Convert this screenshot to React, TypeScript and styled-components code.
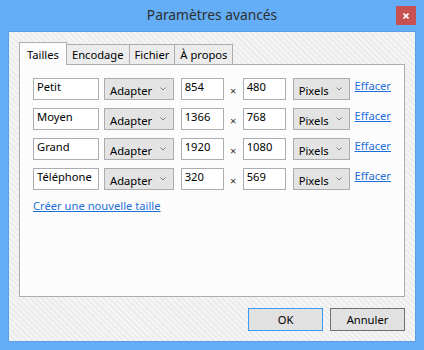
import React from "react";
import styled, { createGlobalStyle } from "styled-components";

const FONT = `"Noto Sans", "Segoe UI", "Liberation Sans", Arial, sans-serif`;
const FS = "11.2px";

const Global = createGlobalStyle`
  html, body { margin: 0; padding: 0; background: #ffffff; }
  body { font-family: ${FONT}; font-size: ${FS}; color: #000; }
  * { box-sizing: border-box; }
`;

const Window = styled.div`
  width: 424px;
  height: 350px;
  background: #63aef6;
  display: flex;
  flex-direction: column;
  padding: 0 8px 8px;
`;

const TitleBar = styled.div`
  height: 31px;
  display: grid;
  grid-template-columns: 1fr auto 1fr;
  align-items: start;
`;

const Title = styled.div`
  grid-column: 2;
  font-size: 13.8px;
  line-height: 20px;
  margin-top: 5px;
  color: #2e2e2e;
`;

const CloseButton = styled.div`
  grid-column: 3;
  justify-self: end;
  margin-top: 6px;
  width: 20px;
  height: 19px;
  background: #c75050;
  display: flex;
  align-items: center;
  justify-content: center;
`;

const Client = styled.div`
  flex: 1;
  border: 1px solid #5a9fe3;
  padding: 10px;
  display: flex;
  flex-direction: column;
  background-color: #efefef;
  background-image: repeating-linear-gradient(
    45deg,
    #ececec 0px,
    #ececec 2px,
    #f5f5f5 2px,
    #f5f5f5 4px
  );
`;

const TabStrip = styled.div`
  height: 23px;
  margin-bottom: -1px;
  display: flex;
  align-items: flex-end;
  position: relative;
  z-index: 1;
`;

const Tab = styled.div<{ $active?: boolean }>`
  height: ${(p) => (p.$active ? 23 : 21)}px;
  padding: 0 ${(p) => (p.$active ? 7 : 5)}px;
  border: 1px solid #adadad;
  border-bottom: ${(p) => (p.$active ? "none" : "1px solid #adadad")};
  background: ${(p) => (p.$active ? "#fcfcfc" : "#ececec")};
  display: flex;
  align-items: center;
  font-size: ${FS};
  color: #000;
  white-space: nowrap;
  position: relative;
  z-index: ${(p) => (p.$active ? 2 : 1)};
  & + & {
    margin-left: -1px;
  }
`;

const Panel = styled.div`
  flex: 1;
  border: 1px solid #adadad;
  background: #fcfcfc;
  padding: 13px;
  display: flex;
  flex-direction: column;
  gap: 8px;
`;

const Row = styled.div`
  height: 22px;
  display: flex;
  align-items: stretch;
  gap: 5px;
`;

const Field = styled.input<{ $w: number }>`
  width: ${(p) => p.$w}px;
  height: 22px;
  border: 1px solid #abadb3;
  background: #ffffff;
  font-family: ${FONT};
  font-size: ${FS};
  color: #000;
  padding: 0 3px 5px;
  margin: 0;
  outline: none;
`;

const Combo = styled.div<{ $w: number }>`
  width: ${(p) => p.$w}px;
  height: 22px;
  border: 1px solid #acacac;
  background-color: #e5e5e5;
  background-image: repeating-conic-gradient(#e9e9e9 0 25%, #dedede 0 50%);
  background-size: 2px 2px;
  display: flex;
  align-items: center;
  justify-content: space-between;
  padding: 2px 7px 0 5px;
  color: #000;
`;

const Chevron = styled.svg`
  width: 6px;
  height: 4px;
  flex: none;
  margin-top: -3px;
`;

const SizePair = styled.div`
  display: flex;
  gap: 5px;
  margin: 0 2px;
`;

const Times = styled.span`
  width: 9px;
  font-size: 11px;
  line-height: 14px;
  color: #333;
  text-align: center;
  align-self: center;
  margin-top: 3px;
`;

const Link = styled.a`
  color: #1f6fd8;
  text-decoration: underline;
  font-size: ${FS};
  line-height: 14px;
  cursor: pointer;
  align-self: flex-start;
  margin-top: 1px;
  white-space: nowrap;
`;

const Footer = styled.div`
  margin-top: 11px;
  display: flex;
  justify-content: flex-end;
  gap: 7px;
`;

const Button = styled.div<{ $default?: boolean }>`
  width: 75px;
  height: 23px;
  border: 1px solid ${(p) => (p.$default ? "#3c9bf2" : "#707070")};
  background: #e1e1e1;
  display: flex;
  align-items: center;
  justify-content: center;
  font-size: ${FS};
  color: #000;
`;

const ChevronIcon = () => (
  <Chevron viewBox="0 0 6 4">
    <polyline points="0.5,0.5 3,3 5.5,0.5" fill="none" stroke="#808080" strokeWidth="1" />
  </Chevron>
);

const sizes = [
  { name: "Petit", w: "854", h: "480" },
  { name: "Moyen", w: "1366", h: "768" },
  { name: "Grand", w: "1920", h: "1080" },
  { name: "Téléphone", w: "320", h: "569" },
];

export default function App() {
  return (
    <>
      <Global />
      <Window>
        <TitleBar>
          <Title>Paramètres avancés</Title>
          <CloseButton>
            <svg width="6" height="6" viewBox="0 0 6 6">
              <path d="M0.5 0.5 L5.5 5.5 M5.5 0.5 L0.5 5.5" stroke="#fff" strokeWidth="1.6" />
            </svg>
          </CloseButton>
        </TitleBar>
        <Client>
          <TabStrip>
            <Tab $active>Tailles</Tab>
            <Tab>Encodage</Tab>
            <Tab>Fichier</Tab>
            <Tab>À propos</Tab>
          </TabStrip>
          <Panel>
            {sizes.map((s) => (
              <Row key={s.name}>
                <Field $w={66} defaultValue={s.name} readOnly />
                <Combo $w={70}>
                  <span>Adapter</span>
                  <ChevronIcon />
                </Combo>
                <SizePair>
                  <Field $w={43} defaultValue={s.w} readOnly />
                  <Times>×</Times>
                  <Field $w={43} defaultValue={s.h} readOnly />
                </SizePair>
                <Combo $w={57}>
                  <span>Pixels</span>
                  <ChevronIcon />
                </Combo>
                <Link>Effacer</Link>
              </Row>
            ))}
            <Link>Créer une nouvelle taille</Link>
          </Panel>
          <Footer>
            <Button $default>OK</Button>
            <Button>Annuler</Button>
          </Footer>
        </Client>
      </Window>
    </>
  );
}
